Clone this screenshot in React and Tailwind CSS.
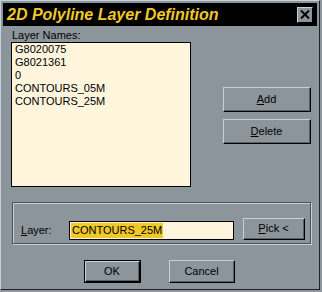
import React from "react";

function Btn({ children, className = "", isDefault = false }) {
  const inner = (
    <div className="w-full h-full border-t border-l border-t-[#c8d0d8] border-l-[#c8d0d8] border-r border-b border-r-black border-b-black">
      <div className="w-full h-full border-r border-b border-r-[#5a6068] border-b-[#5a6068] flex items-center justify-center text-black">
        {children}
      </div>
    </div>
  );
  if (isDefault) {
    return <div className={`border border-black ${className}`}>{inner}</div>;
  }
  return <div className={className}>{inner}</div>;
}

export default function App() {
  const items = ["G8020075", "G8021361", "0", "CONTOURS_05M", "CONTOURS_25M"];
  return (
    <div
      className="w-[322px] h-[292px] bg-[#8c949c] text-[11px] leading-[13px] text-black"
      style={{ fontFamily: '"Liberation Sans", Arial, sans-serif' }}
    >
      <div className="w-[320px] h-[290px] border-t border-l border-t-[#c8d0d8] border-l-[#c8d0d8] border-r border-b border-r-[#20242a] border-b-[#20242a] p-[2px] flex flex-col">
        {/* Title bar */}
        <div className="h-[23px] bg-black flex items-center justify-between pl-[4px] pr-[4px]">
          <span className="text-[#f0c828] font-bold italic text-[16px] leading-[20px]">
            2D Polyline Layer Definition
          </span>
          <div className="w-[16px] h-[16px] bg-[#8c949c] border-t border-l border-t-[#c8d0d8] border-l-[#c8d0d8] border-r border-b border-r-black border-b-black flex items-center justify-center">
            <svg width="10" height="9" viewBox="0 0 10 9">
              <path d="M1 0.5 L9 8.5 M9 0.5 L1 8.5" stroke="black" strokeWidth="2" />
            </svg>
          </div>
        </div>

        {/* Top section */}
        <div className="flex mt-[3px]">
          <div className="flex flex-col ml-[8px]">
            <div className="ml-[1px] h-[13px]">Layer Names:</div>
            <div className="w-[180px] h-[145px] border border-black bg-[#fff5dc] pl-[3px] mt-0">
              {items.map((it) => (
                <div key={it} className="h-[13px]">{it}</div>
              ))}
            </div>
          </div>
          <div className="flex flex-col ml-[32px] mt-[58px] gap-[7px]">
            <Btn className="w-[88px] h-[25px]">
              <span><span className="underline">A</span>dd</span>
            </Btn>
            <Btn className="w-[88px] h-[25px]">
              <span><span className="underline">D</span>elete</span>
            </Btn>
          </div>
        </div>

        {/* Group box */}
        <div className="ml-[9px] mt-[15px] w-[299px] h-[42px] border border-[#4a5058] shadow-[inset_1px_1px_0_#c8d0d8,1px_1px_0_#c8d0d8] flex items-end pb-[3px]">
          <div className="flex items-end w-full">
            <div className="w-[56px] pl-[8px] pb-[3px]">
              <span><span className="underline">L</span>ayer:</span>
            </div>
            <div className="w-[165px] h-[19px] border border-black bg-[#fff5dc] flex items-center pl-[1px]">
              <span className="bg-[#f0c828] px-[1px] h-[15px] leading-[15px]">CONTOURS_25M</span>
            </div>
            <Btn className="w-[62px] h-[22px] ml-[9px]">
              <span><span className="underline">P</span>ick &lt;</span>
            </Btn>
          </div>
        </div>

        {/* Bottom buttons */}
        <div className="flex justify-center gap-[28px] mt-[16px] pr-[1px]">
          <Btn isDefault className="w-[57px] h-[23px]">OK</Btn>
          <Btn className="w-[66px] h-[23px]">Cancel</Btn>
        </div>
      </div>
    </div>
  );
}
